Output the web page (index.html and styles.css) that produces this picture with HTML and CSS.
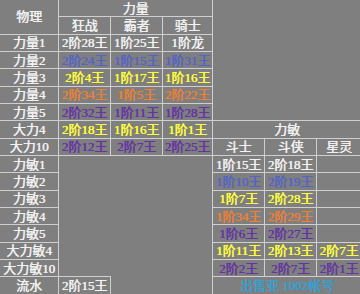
FILE: index.html
```html
<!DOCTYPE html>
<html lang="zh">
<head>
<meta charset="utf-8">
<title>物理</title>
<link rel="stylesheet" href="styles.css">
</head>
<body>
<table class="sheet">
  <colgroup>
    <col class="c-label">
    <col class="c-52">
    <col class="c-52">
    <col class="c-50">
    <col class="c-52">
    <col class="c-52">
    <col class="c-44">
  </colgroup>
  <tr class="row">
    <td class="cell" rowspan="2">物理</td>
    <td class="cell" colspan="3">力量</td>
    <td class="blank" rowspan="7" colspan="3"></td>
  </tr>
  <tr class="row">
    <td class="cell">狂战</td>
    <td class="cell">霸者</td>
    <td class="cell">骑士</td>
  </tr>
  <tr class="row">
    <td class="cell">力量1</td>
    <td class="cell">2阶28王</td>
    <td class="cell">1阶25王</td>
    <td class="cell">1阶龙</td>
  </tr>
  <tr class="row blue">
    <td class="cell label">力量2</td>
    <td class="cell">2阶24王</td>
    <td class="cell">1阶15王</td>
    <td class="cell">1阶31王</td>
  </tr>
  <tr class="row yellow">
    <td class="cell label">力量3</td>
    <td class="cell">2阶4王</td>
    <td class="cell">1阶17王</td>
    <td class="cell">1阶16王</td>
  </tr>
  <tr class="row orange">
    <td class="cell label">力量4</td>
    <td class="cell">2阶34王</td>
    <td class="cell">1阶5王</td>
    <td class="cell">2阶22王</td>
  </tr>
  <tr class="row purple">
    <td class="cell label">力量5</td>
    <td class="cell">2阶32王</td>
    <td class="cell">1阶11王</td>
    <td class="cell">1阶28王</td>
  </tr>
  <tr class="row yellow">
    <td class="cell label">大力4</td>
    <td class="cell">2阶18王</td>
    <td class="cell">1阶16王</td>
    <td class="cell">1阶1王</td>
    <td class="cell label" colspan="3">力敏</td>
  </tr>
  <tr class="row purple">
    <td class="cell label">大力10</td>
    <td class="cell">2阶12王</td>
    <td class="cell">2阶7王</td>
    <td class="cell">2阶25王</td>
    <td class="cell label">斗士</td>
    <td class="cell label">斗侠</td>
    <td class="cell label">星灵</td>
  </tr>
  <tr class="row">
    <td class="cell">力敏1</td>
    <td class="blank" rowspan="7" colspan="3"></td>
    <td class="cell">1阶15王</td>
    <td class="cell">2阶18王</td>
    <td class="cell"></td>
  </tr>
  <tr class="row blue">
    <td class="cell label">力敏2</td>
    <td class="cell">1阶10王</td>
    <td class="cell">2阶19王</td>
    <td class="cell"></td>
  </tr>
  <tr class="row yellow">
    <td class="cell label">力敏3</td>
    <td class="cell">1阶7王</td>
    <td class="cell">2阶28王</td>
    <td class="cell"></td>
  </tr>
  <tr class="row orange">
    <td class="cell label">力敏4</td>
    <td class="cell">1阶34王</td>
    <td class="cell">2阶29王</td>
    <td class="cell"></td>
  </tr>
  <tr class="row purple">
    <td class="cell label">力敏5</td>
    <td class="cell">1阶6王</td>
    <td class="cell">2阶27王</td>
    <td class="cell"></td>
  </tr>
  <tr class="row yellow">
    <td class="cell label">大力敏4</td>
    <td class="cell">1阶11王</td>
    <td class="cell">2阶13王</td>
    <td class="cell">2阶7王</td>
  </tr>
  <tr class="row purple">
    <td class="cell label">大力敏10</td>
    <td class="cell">2阶2王</td>
    <td class="cell">2阶7王</td>
    <td class="cell">2阶1王</td>
  </tr>
  <tr class="row">
    <td class="cell">流水</td>
    <td class="cell">2阶15王</td>
    <td class="blank" colspan="2"></td>
    <td class="cell cyan" colspan="3">出售亚 1002帐号</td>
  </tr>
</table>
</body>
</html>
```

FILE: styles.css
```css
html {
  background: #7f7f7f;
}

body {
  margin: 0;
  background: #7f7f7f;
  overflow: hidden;
}

.sheet {
  border-collapse: collapse;
  table-layout: fixed;
  width: 360px;
  margin-left: -1px;
  margin-top: -1px;
  font-family: "Liberation Serif", "Noto Sans CJK SC", serif;
  font-size: 13px;
  color: #f2f2f2;
}

.c-label { width: 59px; }
.c-52 { width: 52px; }
.c-50 { width: 50px; }
.c-44 { width: 45px; }

.row {
  height: 17.33px;
}

.cell {
  border: 1px solid #cfcfcf;
  padding: 0;
  text-align: center;
  vertical-align: middle;
  white-space: nowrap;
  line-height: 15px;
  overflow: hidden;
  text-shadow: 0.4px 0 0 currentColor;
}

.blank {
  border: none;
  padding: 0;
}

.label {
  color: #f2f2f2;
}

.blue { color: #5464c8; }
.yellow { color: #ffff3a; }
.orange { color: #ec8034; }
.purple { color: #6434a4; }
.cyan { color: #2fa2d8; }
```
